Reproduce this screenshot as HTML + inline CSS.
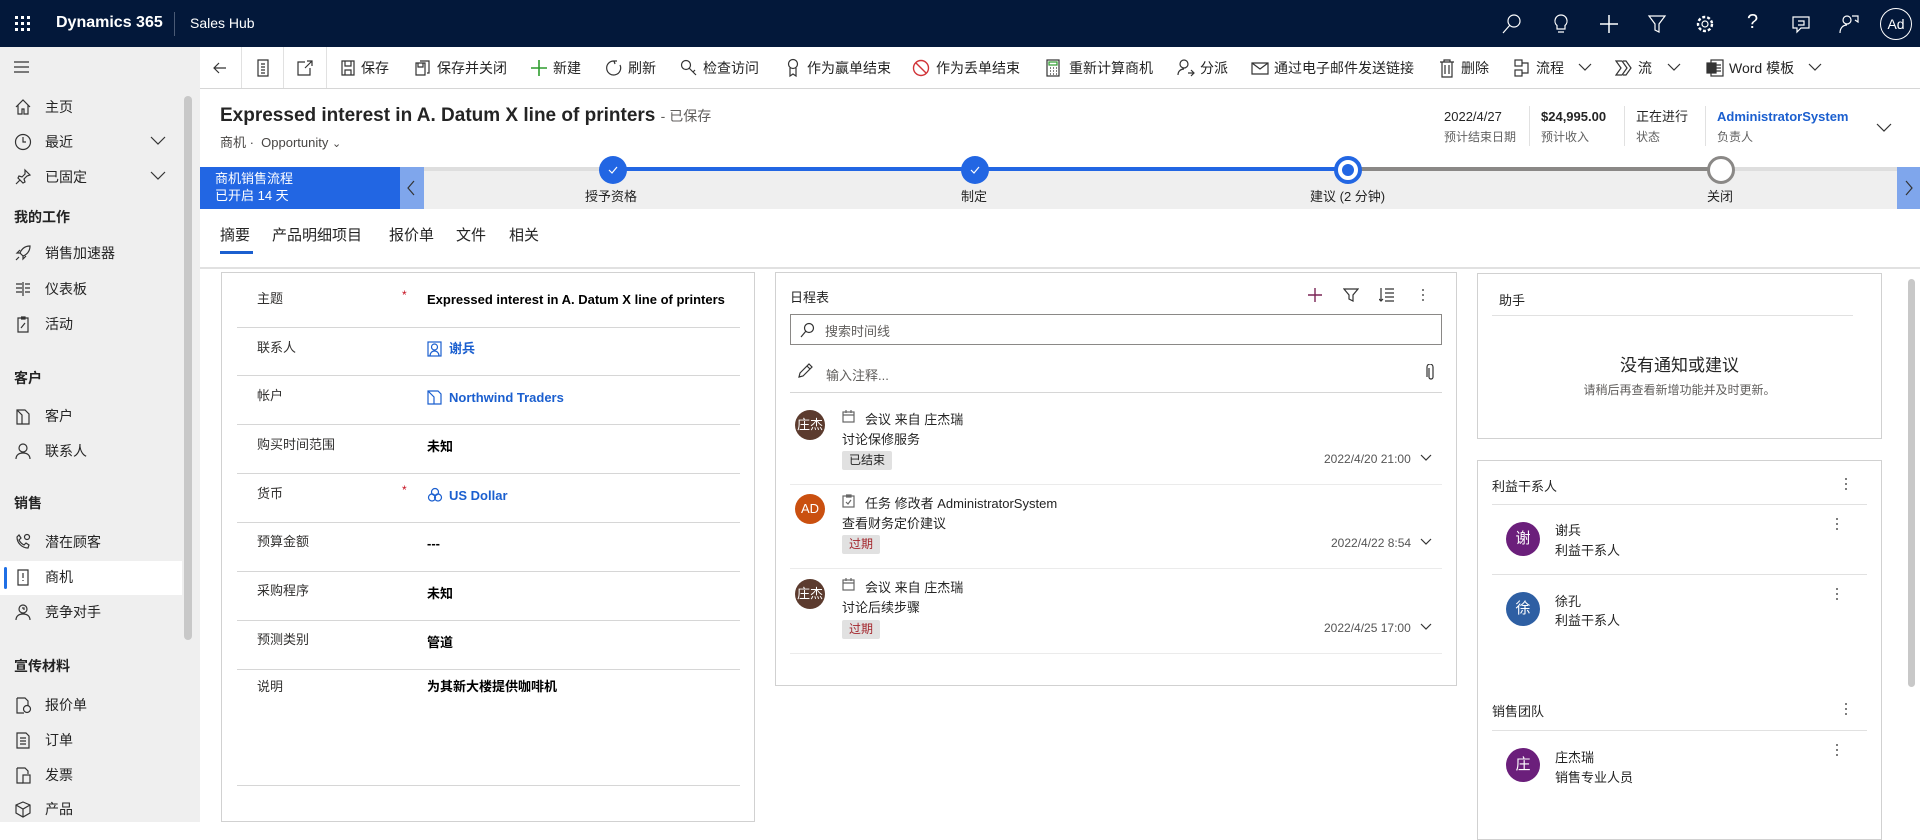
<!DOCTYPE html>
<html><head><meta charset="utf-8">
<style>
*{box-sizing:border-box;margin:0;padding:0}
body{width:1920px;height:822px;overflow:hidden;position:relative;background:#fff;font-family:"Liberation Sans","Noto Sans CJK SC",sans-serif;color:#242424;font-size:14px}
.a{position:absolute;white-space:nowrap}
svg.i{position:absolute;fill:none;stroke:#333;stroke-width:1.2}
#top{left:0;top:0;width:1920px;height:47px;background:#03183a}
#side{left:0;top:47px;width:200px;height:775px;background:#efefef}
.sb{left:45px;font-size:14px;color:#242424;line-height:18px}
.sh{left:14px;font-size:14px;font-weight:bold;line-height:18px}
.cb{font-size:14px;color:#242424;line-height:18px;top:59px}
.card{position:absolute;border:1px solid #d1d1d1;background:#fff}
.lbl{left:257px;font-size:13px;color:#323130;line-height:18px}
.val{left:427px;font-size:13px;font-weight:bold;line-height:18px;color:#000}
.rl{position:absolute;left:237px;width:503px;height:1px;background:#d6d6d6}
.av{position:absolute;border-radius:50%;color:#fff;text-align:center;font-size:14px}
.badge{position:absolute;left:842px;height:19px;background:#e1e1e1;border-radius:2px;font-size:12px;line-height:19px;padding:0 7px}
.dt{font-size:12px;color:#555;line-height:16px}
.dots{position:absolute;width:3px}
.dots i{display:block;width:2px;height:2px;background:#555;border-radius:50%;margin-bottom:3px}
</style></head><body>

<div class="a" id="top"></div>
<svg class="i" style="left:14px;top:15px" width="18" height="18"><g fill="#fff" stroke="none"><rect x="1" y="1" width="3" height="3"/><rect x="7" y="1" width="3" height="3"/><rect x="13" y="1" width="3" height="3"/><rect x="1" y="7" width="3" height="3"/><rect x="7" y="7" width="3" height="3"/><rect x="13" y="7" width="3" height="3"/><rect x="1" y="13" width="3" height="3"/><rect x="7" y="13" width="3" height="3"/><rect x="13" y="13" width="3" height="3"/></g></svg>
<div class="a" style="left:56px;top:14px;color:#fff;font-size:16px;font-weight:bold">Dynamics 365</div>
<div class="a" style="left:174px;top:12px;width:1px;height:24px;background:#4a5a75"></div>
<div class="a" style="left:190px;top:15px;color:#fff;font-size:14px">Sales Hub</div>
<svg class="i" style="left:1500px;top:12px;stroke:#fff" width="24" height="24"><circle cx="14" cy="9" r="6"/><path d="M10 13 L3 21"/></svg>
<svg class="i" style="left:1549px;top:12px;stroke:#fff" width="24" height="24"><path d="M12 3a6 6 0 0 0-4 10.5V17h8v-3.5A6 6 0 0 0 12 3zM9 20h6"/></svg>
<svg class="i" style="left:1597px;top:12px;stroke:#fff;stroke-width:1.5" width="24" height="24"><path d="M12 3v18M3 12h18"/></svg>
<svg class="i" style="left:1645px;top:12px;stroke:#fff" width="24" height="24"><path d="M4 4h16l-6 8v8l-4-2v-6z"/></svg>
<svg class="i" style="left:1693px;top:12px;stroke:#fff" width="24" height="24"><circle cx="12" cy="12" r="3"/><circle cx="12" cy="12" r="7" stroke-dasharray="3 2" stroke-width="2.4"/></svg>
<div class="a" style="left:1747px;top:11px;color:#fff;font-size:20px">?</div>
<svg class="i" style="left:1789px;top:12px;stroke:#fff" width="24" height="24"><path d="M4 5h16v11h-8l-4 4v-4H4zM9 9h6v4H9"/></svg>
<svg class="i" style="left:1837px;top:12px;stroke:#fff" width="24" height="24"><circle cx="10" cy="8" r="4"/><path d="M3 21c0-5 3-8 7-8M15 4h6v6l-3-2"/></svg>
<div class="a" style="left:1880px;top:8px;width:32px;height:32px;border:1px solid #fff;border-radius:50%;color:#fff;font-size:14px;text-align:center;line-height:30px">Ad</div>

<div class="a" id="side"></div>
<div class="a" style="left:184px;top:96px;width:8px;height:544px;background:#c8c8c8;border-radius:4px"></div>
<svg class="i" style="left:13px;top:60px" width="18" height="14"><path d="M1 2h15M1 7h15M1 12h15"/></svg>
<div class="a" style="left:0;top:561px;width:182px;height:34px;background:#fff"></div>
<div class="a" style="left:4px;top:567px;width:3px;height:22px;background:#1f6fe5;border-radius:2px"></div>
<div class="a sb" style="top:98px">主页</div>
<div class="a sb" style="top:133px">最近</div>
<div class="a sb" style="top:168px">已固定</div>
<div class="a sh" style="top:208px">我的工作</div>
<div class="a sb" style="top:244px">销售加速器</div>
<div class="a sb" style="top:280px">仪表板</div>
<div class="a sb" style="top:315px">活动</div>
<div class="a sh" style="top:369px">客户</div>
<div class="a sb" style="top:407px">客户</div>
<div class="a sb" style="top:442px">联系人</div>
<div class="a sh" style="top:494px">销售</div>
<div class="a sb" style="top:533px">潜在顾客</div>
<div class="a sb" style="top:568px">商机</div>
<div class="a sb" style="top:603px">竞争对手</div>
<div class="a sh" style="top:657px">宣传材料</div>
<div class="a sb" style="top:696px">报价单</div>
<div class="a sb" style="top:731px">订单</div>
<div class="a sb" style="top:766px">发票</div>
<div class="a sb" style="top:800px">产品</div>
<svg class="i" style="left:14px;top:98px" width="18" height="18"><path d="M2 9L9 2l7 7M4 7v9h4v-5h2v5h4V7"/></svg>
<svg class="i" style="left:14px;top:133px" width="18" height="18"><circle cx="9" cy="9" r="7.5"/><path d="M9 4v5h3"/></svg>
<svg class="i" style="left:14px;top:168px" width="18" height="18"><path d="M11 2l5 5-3 1-3 3 1 3-2 1-5-5 1-2 3 1 3-3zM6 12l-4 4"/></svg>
<svg class="i" style="left:14px;top:244px" width="18" height="18"><path d="M16 2c-6 0-9 4-10 7l3 3c3-1 7-4 7-10zM6 9H3l3-3M9 12v3l3-3M5 13l-3 3"/></svg>
<svg class="i" style="left:14px;top:280px" width="18" height="18"><path d="M2 4h6M2 8h6M2 12h6M11 4h5M11 8h5M11 12h5M9 2v14"/></svg>
<svg class="i" style="left:14px;top:315px" width="18" height="18"><path d="M4 3h10v14H4zM7 2h4v2H7M7 13l4-5"/></svg>
<svg class="i" style="left:14px;top:407px" width="18" height="18"><path d="M3 3h8l4 4v10H3zM3 3l5 5v9"/></svg>
<svg class="i" style="left:14px;top:442px" width="18" height="18"><circle cx="9" cy="6" r="4"/><path d="M2 17c0-4 3-6 7-6s7 2 7 6"/></svg>
<svg class="i" style="left:14px;top:533px" width="18" height="18"><path d="M3 4c0 6 5 11 11 11l1-3-3-2-2 2c-2-1-4-3-5-5l2-2-2-3z"/><circle cx="13" cy="4" r="2.5"/></svg>
<svg class="i" style="left:14px;top:568px" width="18" height="18"><path d="M4 2h10v15H4zM9 5v5M9 12v1"/></svg>
<svg class="i" style="left:14px;top:603px" width="18" height="18"><circle cx="9" cy="6" r="4"/><path d="M2 17c0-4 3-6 7-6s7 2 7 6M8 5h2v2"/></svg>
<svg class="i" style="left:14px;top:696px" width="18" height="18"><path d="M3 2h8l3 3v5M3 2v15h7"/><circle cx="13" cy="13" r="3.5"/></svg>
<svg class="i" style="left:14px;top:731px" width="18" height="18"><path d="M3 2h9l3 3v12H3zM6 7h6M6 10h6M6 13h6"/></svg>
<svg class="i" style="left:14px;top:766px" width="18" height="18"><path d="M3 2h8l3 3v3M3 2v15h6"/><rect x="9" y="9" width="7" height="8"/></svg>
<svg class="i" style="left:14px;top:800px" width="18" height="18"><path d="M9 2l7 3v8l-7 4-7-4V5zM2 5l7 4 7-4M9 9v8"/></svg>
<svg class="i" style="left:150px;top:136px" width="16" height="10"><path d="M1 1l7 7 7-7"/></svg>
<svg class="i" style="left:150px;top:171px" width="16" height="10"><path d="M1 1l7 7 7-7"/></svg>

<div class="a" style="left:200px;top:88px;width:1720px;height:1px;background:#d6d6d6"></div>
<div class="a" style="left:241px;top:47px;width:1px;height:41px;background:#e1e1e1"></div>
<div class="a" style="left:283px;top:47px;width:1px;height:41px;background:#e1e1e1"></div>
<div class="a" style="left:326px;top:47px;width:1px;height:41px;background:#e1e1e1"></div>
<svg class="i" style="left:212px;top:60px" width="16" height="16"><path d="M14 8H2M7 3L2 8l5 5"/></svg>
<svg class="i" style="left:255px;top:59px" width="16" height="18"><path d="M3 1h10v16H3zM6 5h4M6 8h4M6 11h4M6 14h4"/></svg>
<svg class="i" style="left:296px;top:59px" width="18" height="18"><path d="M9 3H2v13h12V9M11 2h5v5M16 2l-7 7"/></svg>
<svg class="i" style="left:340px;top:59px" width="16" height="18"><path d="M2 2h12v14H2zM5 2v5h6V2M5 16v-5h6v5"/></svg>
<div class="a cb" style="left:361px">保存</div>
<svg class="i" style="left:414px;top:59px" width="18" height="18"><path d="M2 4h9v12H2zM4 4v4h5V4M6 2h9v12h-2"/></svg>
<div class="a cb" style="left:437px">保存并关闭</div>
<svg class="i" style="left:530px;top:59px;stroke:#2e9c2e;stroke-width:1.6" width="18" height="18"><path d="M9 1v16M1 9h16"/></svg>
<div class="a cb" style="left:553px">新建</div>
<svg class="i" style="left:605px;top:59px" width="18" height="18"><path d="M9 2a7 7 0 1 0 6 4M9 2l3 0M9 2l1 3"/></svg>
<div class="a cb" style="left:628px">刷新</div>
<svg class="i" style="left:680px;top:59px" width="18" height="18"><circle cx="6" cy="6" r="4.5"/><path d="M9 9l7 7M13 13l2-2"/></svg>
<div class="a cb" style="left:703px">检查访问</div>
<svg class="i" style="left:785px;top:58px" width="16" height="20"><circle cx="8" cy="6" r="4.5"/><path d="M5 10v8l3-2 3 2v-8"/></svg>
<div class="a cb" style="left:807px">作为赢单结束</div>
<svg class="i" style="left:912px;top:59px;stroke:#d13438;stroke-width:1.4" width="18" height="18"><circle cx="9" cy="9" r="7.5"/><path d="M4 4l10 10"/></svg>
<div class="a cb" style="left:936px">作为丢单结束</div>
<svg class="i" style="left:1046px;top:59px" width="14" height="18"><rect x="1" y="1" width="12" height="16"/><rect x="3" y="3" width="8" height="3" stroke="#2e9c2e"/><path d="M4 9h1M7 9h1M10 9h1M4 12h1M7 12h1M10 12h1M4 15h1M7 15h1M10 15h1"/></svg>
<div class="a cb" style="left:1069px">重新计算商机</div>
<svg class="i" style="left:1176px;top:58px" width="20" height="20"><circle cx="8" cy="6" r="4"/><path d="M2 17c0-4 3-6 6-6M12 15h6M15 12l3 3-3 3"/></svg>
<div class="a cb" style="left:1200px">分派</div>
<svg class="i" style="left:1251px;top:59px" width="18" height="18"><path d="M1 4h16v11H1zM1 4l8 6 8-6"/></svg>
<div class="a cb" style="left:1274px">通过电子邮件发送链接</div>
<svg class="i" style="left:1439px;top:58px" width="16" height="20"><path d="M1 4h14M5 4V2h6v2M3 4v15h10V4M6 7v9M10 7v9"/></svg>
<div class="a cb" style="left:1461px">删除</div>
<svg class="i" style="left:1514px;top:59px" width="18" height="18"><rect x="1" y="1" width="7" height="6"/><rect x="1" y="11" width="7" height="6"/><path d="M8 4h6v10H8"/></svg>
<div class="a cb" style="left:1536px">流程</div>
<svg class="i" style="left:1578px;top:63px" width="14" height="9"><path d="M1 1l6 6 6-6"/></svg>
<svg class="i" style="left:1615px;top:59px" width="18" height="18"><path d="M1 2h6l5 7-5 7H1l5-7zM8 2h3l5 7-5 7H8"/></svg>
<div class="a cb" style="left:1638px">流</div>
<svg class="i" style="left:1667px;top:63px" width="14" height="9"><path d="M1 1l6 6 6-6"/></svg>
<svg class="i" style="left:1706px;top:59px" width="18" height="18"><rect x="5" y="1" width="12" height="16"/><rect x="1" y="4" width="9" height="10" fill="#333"/><path d="M10 6h5M10 9h5M10 12h5"/></svg>
<div class="a cb" style="left:1729px">Word 模板</div>
<svg class="i" style="left:1808px;top:63px" width="14" height="9"><path d="M1 1l6 6 6-6"/></svg>

<div class="a" style="left:220px;top:105px;font-size:19px;font-weight:600;color:#242424">Expressed interest in A. Datum X line of printers <span style="font-size:14px;font-weight:normal;color:#605e5c">- 已保存</span></div>
<div class="a" style="left:220px;top:132px;font-size:13px;color:#484644">商机 · &nbsp;Opportunity <span style="font-size:11px">&#8964;</span></div>
<div class="a" style="left:1444px;top:109px;font-size:13px;line-height:16px">2022/4/27</div>
<div class="a" style="left:1444px;top:128px;font-size:12px;color:#616161">预计结束日期</div>
<div class="a" style="left:1529px;top:106px;width:1px;height:40px;background:#e1e1e1"></div>
<div class="a" style="left:1541px;top:109px;font-size:13px;font-weight:600;line-height:16px">$24,995.00</div>
<div class="a" style="left:1541px;top:128px;font-size:12px;color:#616161">预计收入</div>
<div class="a" style="left:1624px;top:106px;width:1px;height:40px;background:#e1e1e1"></div>
<div class="a" style="left:1636px;top:109px;font-size:13px;line-height:16px">正在进行</div>
<div class="a" style="left:1636px;top:128px;font-size:12px;color:#616161">状态</div>
<div class="a" style="left:1705px;top:106px;width:1px;height:40px;background:#e1e1e1"></div>
<div class="a" style="left:1717px;top:109px;font-size:13px;font-weight:600;color:#1b5fcf;line-height:16px">AdministratorSystem</div>
<div class="a" style="left:1717px;top:128px;font-size:12px;color:#616161">负责人</div>
<svg class="i" style="left:1876px;top:123px" width="16" height="10"><path d="M1 1l7 7 7-7"/></svg>

<div class="a" style="left:200px;top:167px;width:1720px;height:42px;background:#efefef"></div>
<div class="a" style="left:424px;top:167px;width:1473px;height:4px;background:#dedede"></div>
<div class="a" style="left:612px;top:167px;width:736px;height:4px;background:#2266e3"></div>
<div class="a" style="left:1348px;top:167px;width:373px;height:4px;background:#8a8886"></div>
<div class="a" style="left:200px;top:167px;width:200px;height:42px;background:#2266e3"></div>
<div class="a" style="left:215px;top:170px;color:#fff;font-size:13px;line-height:17px">商机销售流程<br>已开启 14 天</div>
<div class="a" style="left:400px;top:167px;width:24px;height:42px;background:#7fa6ec"></div>
<svg class="i" style="left:406px;top:180px" width="10" height="16"><path d="M8 1L2 8l6 7"/></svg>
<div class="a" style="left:1897px;top:167px;width:23px;height:42px;background:#7fa6ec"></div>
<svg class="i" style="left:1904px;top:180px" width="10" height="16"><path d="M2 1l6 7-6 7"/></svg>
<div class="a" style="left:599px;top:156px;width:28px;height:28px;border-radius:50%;background:#2266e3"></div>
<svg class="i" style="left:606px;top:163px;stroke:#fff" width="14" height="14"><path d="M3 7l3 3 5-6"/></svg>
<div class="a" style="left:961px;top:156px;width:28px;height:28px;border-radius:50%;background:#2266e3"></div>
<svg class="i" style="left:968px;top:163px;stroke:#fff" width="14" height="14"><path d="M3 7l3 3 5-6"/></svg>
<div class="a" style="left:1334px;top:156px;width:28px;height:28px;border-radius:50%;background:#fff;border:4px solid #2266e3"></div>
<div class="a" style="left:1342px;top:164px;width:12px;height:12px;border-radius:50%;background:#2266e3"></div>
<div class="a" style="left:1707px;top:156px;width:28px;height:28px;border-radius:50%;background:#fff;border:3px solid #8a8886"></div>
<div class="a" style="left:585px;top:186px;font-size:13px">授予资格</div>
<div class="a" style="left:961px;top:186px;font-size:13px">制定</div>
<div class="a" style="left:1310px;top:186px;font-size:13px">建议 (2 分钟)</div>
<div class="a" style="left:1707px;top:186px;font-size:13px">关闭</div>

<div class="a" style="left:220px;top:226px;font-size:15px;line-height:20px">摘要</div>
<div class="a" style="left:272px;top:226px;font-size:15px;line-height:20px">产品明细项目</div>
<div class="a" style="left:389px;top:226px;font-size:15px;line-height:20px">报价单</div>
<div class="a" style="left:456px;top:226px;font-size:15px;line-height:20px">文件</div>
<div class="a" style="left:509px;top:226px;font-size:15px;line-height:20px">相关</div>
<div class="a" style="left:220px;top:251px;width:33px;height:3px;background:#1b5fcf"></div>
<div class="a" style="left:200px;top:267px;width:1720px;height:2px;background:#e1e1e1"></div>

<div class="card" style="left:221px;top:272px;width:534px;height:550px"></div>
<div class="a lbl" style="top:290px">主题</div><div class="a" style="left:402px;top:288px;color:#c50f1f;font-size:12px">*</div>
<div class="a val" style="top:291px;font-weight:600">Expressed interest in A. Datum X line of printers</div>
<div class="rl" style="top:327px"></div>
<div class="a lbl" style="top:339px">联系人</div>
<svg class="i" style="left:427px;top:341px;stroke:#1b5fcf" width="15" height="16"><rect x="1" y="1" width="13" height="14"/><circle cx="7.5" cy="6" r="3"/><path d="M3 15c0-3 2-5 4.5-5s4.5 2 4.5 5"/></svg>
<div class="a val" style="left:449px;top:340px;color:#1b5fcf">谢兵</div>
<div class="rl" style="top:375px"></div>
<div class="a lbl" style="top:387px">帐户</div>
<svg class="i" style="left:427px;top:389px;stroke:#1b5fcf" width="15" height="16"><path d="M1 2h10l3 3v10H1zM1 2l6 6v7"/></svg>
<div class="a val" style="left:449px;top:389px;color:#1b5fcf">Northwind Traders</div>
<div class="rl" style="top:424px"></div>
<div class="a lbl" style="top:436px">购买时间范围</div>
<div class="a val" style="top:438px">未知</div>
<div class="rl" style="top:473px"></div>
<div class="a lbl" style="top:485px">货币</div><div class="a" style="left:402px;top:483px;color:#c50f1f;font-size:12px">*</div>
<svg class="i" style="left:427px;top:487px;stroke:#1b5fcf" width="16" height="16"><circle cx="8" cy="5" r="3.5"/><circle cx="5" cy="10.5" r="3.5"/><circle cx="11" cy="10.5" r="3.5"/></svg>
<div class="a val" style="left:449px;top:487px;color:#1b5fcf">US Dollar</div>
<div class="rl" style="top:522px"></div>
<div class="a lbl" style="top:533px">预算金额</div>
<div class="a val" style="top:535px">---</div>
<div class="rl" style="top:571px"></div>
<div class="a lbl" style="top:582px">采购程序</div>
<div class="a val" style="top:585px">未知</div>
<div class="rl" style="top:620px"></div>
<div class="a lbl" style="top:631px">预测类别</div>
<div class="a val" style="top:634px">管道</div>
<div class="rl" style="top:669px"></div>
<div class="a lbl" style="top:678px">说明</div>
<div class="a val" style="top:678px">为其新大楼提供咖啡机</div>
<div class="rl" style="top:785px"></div>

<div class="card" style="left:775px;top:272px;width:682px;height:414px"></div>
<div class="a" style="left:790px;top:287px;font-size:13px">日程表</div>
<svg class="i" style="left:1307px;top:287px;stroke:#7a2455;stroke-width:1.4" width="16" height="16"><path d="M8 1v14M1 8h14"/></svg>
<svg class="i" style="left:1343px;top:287px" width="16" height="16"><path d="M1 2h14l-5 6v6l-4-2V8z"/></svg>
<svg class="i" style="left:1379px;top:287px" width="16" height="16"><path d="M2 1v13M0 12l2 2 2-2M6 2h9M6 6h9M6 10h9M6 14h9"/></svg>
<div class="dots" style="left:1422px;top:289px"><i></i><i></i><i></i></div>
<div class="a" style="left:790px;top:314px;width:652px;height:31px;border:1px solid #8a8886"></div>
<svg class="i" style="left:799px;top:322px" width="16" height="16"><circle cx="10" cy="6" r="4.5"/><path d="M7 9l-5 6"/></svg>
<div class="a" style="left:825px;top:321px;font-size:13px;color:#605e5c">搜索时间线</div>
<svg class="i" style="left:797px;top:363px" width="16" height="16"><path d="M2 14l1-4 9-9 3 3-9 9zM10 3l3 3"/></svg>
<div class="a" style="left:826px;top:365px;font-size:13px;color:#605e5c">输入注释...</div>
<svg class="i" style="left:1426px;top:364px" width="10" height="17"><path d="M3 4v9a2 2 0 0 0 4 0V3a3 3 0 0 0-6 0v10"/></svg>
<div class="a" style="left:790px;top:392px;width:652px;height:1px;background:#d6d6d6"></div>

<div class="av" style="left:795px;top:410px;width:30px;height:30px;background:#5c3b2e;line-height:30px;font-size:13px">庄杰</div>
<svg class="i" style="left:842px;top:410px;stroke:#666" width="13" height="13"><rect x="1" y="2" width="11" height="10"/><path d="M1 5h11M4 0v3M9 0v3"/></svg>
<div class="a" style="left:865px;top:409px;font-size:13px">会议 来自 庄杰瑞</div>
<div class="a" style="left:842px;top:429px;font-size:13px">讨论保修服务</div>
<div class="badge" style="top:451px">已结束</div>
<div class="a dt" style="left:1324px;top:451px">2022/4/20 21:00</div>
<svg class="i" style="left:1420px;top:454px" width="12" height="8"><path d="M1 1l5 5 5-5"/></svg>
<div class="a" style="left:790px;top:484px;width:652px;height:1px;background:#ebebeb"></div>

<div class="av" style="left:795px;top:494px;width:30px;height:30px;background:#ca5010;line-height:30px;font-size:13px">AD</div>
<svg class="i" style="left:842px;top:494px;stroke:#666" width="13" height="14"><rect x="1" y="2" width="11" height="11"/><path d="M4 1h5v2H4M4 8l2 2 3-4"/></svg>
<div class="a" style="left:865px;top:493px;font-size:13px">任务 修改者 AdministratorSystem</div>
<div class="a" style="left:842px;top:513px;font-size:13px">查看财务定价建议</div>
<div class="badge" style="top:535px;color:#a4262c">过期</div>
<div class="a dt" style="left:1331px;top:535px">2022/4/22 8:54</div>
<svg class="i" style="left:1420px;top:538px" width="12" height="8"><path d="M1 1l5 5 5-5"/></svg>
<div class="a" style="left:790px;top:568px;width:652px;height:1px;background:#ebebeb"></div>

<div class="av" style="left:795px;top:579px;width:30px;height:30px;background:#5c3b2e;line-height:30px;font-size:13px">庄杰</div>
<svg class="i" style="left:842px;top:578px;stroke:#666" width="13" height="13"><rect x="1" y="2" width="11" height="10"/><path d="M1 5h11M4 0v3M9 0v3"/></svg>
<div class="a" style="left:865px;top:577px;font-size:13px">会议 来自 庄杰瑞</div>
<div class="a" style="left:842px;top:597px;font-size:13px">讨论后续步骤</div>
<div class="badge" style="top:620px;color:#a4262c">过期</div>
<div class="a dt" style="left:1324px;top:620px">2022/4/25 17:00</div>
<svg class="i" style="left:1420px;top:623px" width="12" height="8"><path d="M1 1l5 5 5-5"/></svg>
<div class="a" style="left:790px;top:653px;width:652px;height:1px;background:#ebebeb"></div>

<div class="card" style="left:1477px;top:273px;width:405px;height:166px"></div>
<div class="a" style="left:1499px;top:290px;font-size:13px">助手</div>
<div class="a" style="left:1492px;top:315px;width:361px;height:1px;background:#e1e1e1"></div>
<div class="a" style="left:1477px;top:351px;width:405px;text-align:center;font-size:17px">没有通知或建议</div>
<div class="a" style="left:1477px;top:381px;width:405px;text-align:center;font-size:12px;color:#605e5c">请稍后再查看新增功能并及时更新。</div>

<div class="card" style="left:1477px;top:460px;width:405px;height:380px"></div>
<div class="a" style="left:1492px;top:476px;font-size:13px">利益干系人</div>
<div class="dots" style="left:1845px;top:478px"><i></i><i></i><i></i></div>
<div class="a" style="left:1492px;top:504px;width:375px;height:1px;background:#e1e1e1"></div>
<div class="av" style="left:1506px;top:522px;width:34px;height:34px;background:#6b1f7b;line-height:34px;font-size:15px">谢</div>
<div class="a" style="left:1555px;top:520px;font-size:13px">谢兵</div>
<div class="a" style="left:1555px;top:540px;font-size:13px">利益干系人</div>
<div class="dots" style="left:1836px;top:518px"><i></i><i></i><i></i></div>
<div class="a" style="left:1492px;top:574px;width:375px;height:1px;background:#e1e1e1"></div>
<div class="av" style="left:1506px;top:592px;width:34px;height:34px;background:#2e5fa3;line-height:34px;font-size:15px">徐</div>
<div class="a" style="left:1555px;top:591px;font-size:13px">徐孔</div>
<div class="a" style="left:1555px;top:610px;font-size:13px">利益干系人</div>
<div class="dots" style="left:1836px;top:588px"><i></i><i></i><i></i></div>
<div class="a" style="left:1492px;top:701px;font-size:13px">销售团队</div>
<div class="dots" style="left:1845px;top:703px"><i></i><i></i><i></i></div>
<div class="a" style="left:1492px;top:730px;width:375px;height:1px;background:#e1e1e1"></div>
<div class="av" style="left:1506px;top:748px;width:34px;height:34px;background:#6b1f7b;line-height:34px;font-size:15px">庄</div>
<div class="a" style="left:1555px;top:747px;font-size:13px">庄杰瑞</div>
<div class="a" style="left:1555px;top:767px;font-size:13px">销售专业人员</div>
<div class="dots" style="left:1836px;top:744px"><i></i><i></i><i></i></div>

<div class="a" style="left:1908px;top:279px;width:7px;height:408px;background:#c8c8c8;border-radius:4px"></div>
</body></html>
